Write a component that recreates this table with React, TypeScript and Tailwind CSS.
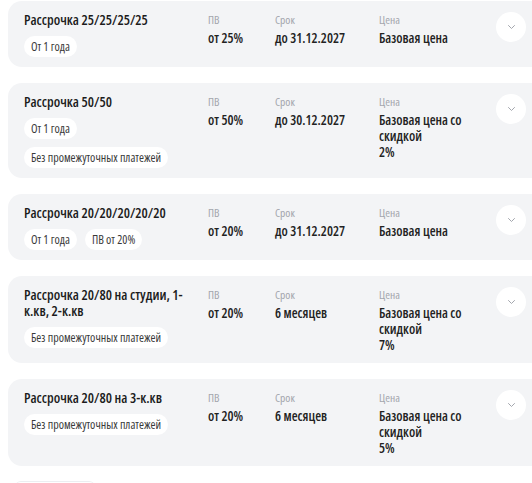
const plans = [
  {
    title: 'Рассрочка 25/25/25/25',
    tags: [['От 1 года']],
    pv: 'от 25%',
    term: 'до 31.12.2027',
    price: ['Базовая цена']
  },
  {
    title: 'Рассрочка 50/50',
    tags: [['От 1 года'], ['Без промежуточных платежей']],
    pv: 'от 50%',
    term: 'до 30.12.2027',
    price: ['Базовая цена со скидкой', '2%']
  },
  {
    title: 'Рассрочка 20/20/20/20/20',
    tags: [['От 1 года', 'ПВ от 20%']],
    pv: 'от 20%',
    term: 'до 31.12.2027',
    price: ['Базовая цена']
  },
  {
    title: 'Рассрочка 20/80 на студии, 1-к.кв, 2-к.кв',
    tags: [['Без промежуточных платежей']],
    pv: 'от 20%',
    term: '6 месяцев',
    price: ['Базовая цена со скидкой', '7%']
  },
  {
    title: 'Рассрочка 20/80 на 3-к.кв',
    tags: [['Без промежуточных платежей']],
    pv: 'от 20%',
    term: '6 месяцев',
    price: ['Базовая цена со скидкой', '5%']
  }
];

const Chip = ({ label }: { label: string }) => (
  <span className="inline-flex h-[21px] items-center whitespace-nowrap rounded-full bg-white px-[7px] text-[12px] text-[#3a3a3a]">
    {label}
  </span>
);

const Field = ({ label, lines }: { label: string; lines: string[] }) => (
  <div>
    <div className="mb-[2px] text-[11.5px] leading-[16px] text-[#a3a6ad]">{label}</div>
    <div className="text-[13.5px] font-semibold leading-[16px] text-[#222]">
      {lines[0]}
      {lines[1] && (
        <>
          <br />
          {lines[1]}
        </>
      )}
    </div>
  </div>
);

export default function App() {
  return (
    <div className="min-h-[483px] w-full overflow-hidden bg-white pt-[1px] font-['Open_Sans',sans-serif] [font-stretch:85%]">
      <div className="flex flex-col gap-[16px]">
        {plans.map((plan, index) => (
          <div
            key={index}
            className="ml-[8px] grid w-[540px] grid-cols-[168px_51px_88px_101px_30px] gap-x-[16px] rounded-[14px] bg-[#f3f4f6] pb-[10px] pl-[16px] pt-[11px]">
            <div>
              <div className="text-[14px] font-semibold leading-[16px] text-[#1c1c1c]">{plan.title}</div>
              <div className="mt-[8px] flex flex-col gap-[8px]">
                {plan.tags.map((row, r) => (
                  <div key={r} className="flex gap-[8px]">
                    {row.map((tag) => (
                      <Chip key={tag} label={tag} />
                    ))}
                  </div>
                ))}
              </div>
            </div>
            <Field label="ПВ" lines={[plan.pv]} />
            <Field label="Срок" lines={[plan.term]} />
            <Field label="Цена" lines={plan.price} />
            <button className="flex h-[30px] w-[30px] items-center justify-center rounded-full bg-white">
              <svg width="9" height="6" viewBox="0 0 9 6" fill="none">
                <path d="M1.5 1.5L4.5 4.5L7.5 1.5" stroke="#a3a6ad" strokeWidth="1" strokeLinecap="round" />
              </svg>
            </button>
          </div>
        ))}
      </div>
      <div className="ml-[15px] mt-[15px] h-[20px] w-[80px] rounded-t-[6px] border-t border-[#eceef1]" />
    </div>
  );
}
